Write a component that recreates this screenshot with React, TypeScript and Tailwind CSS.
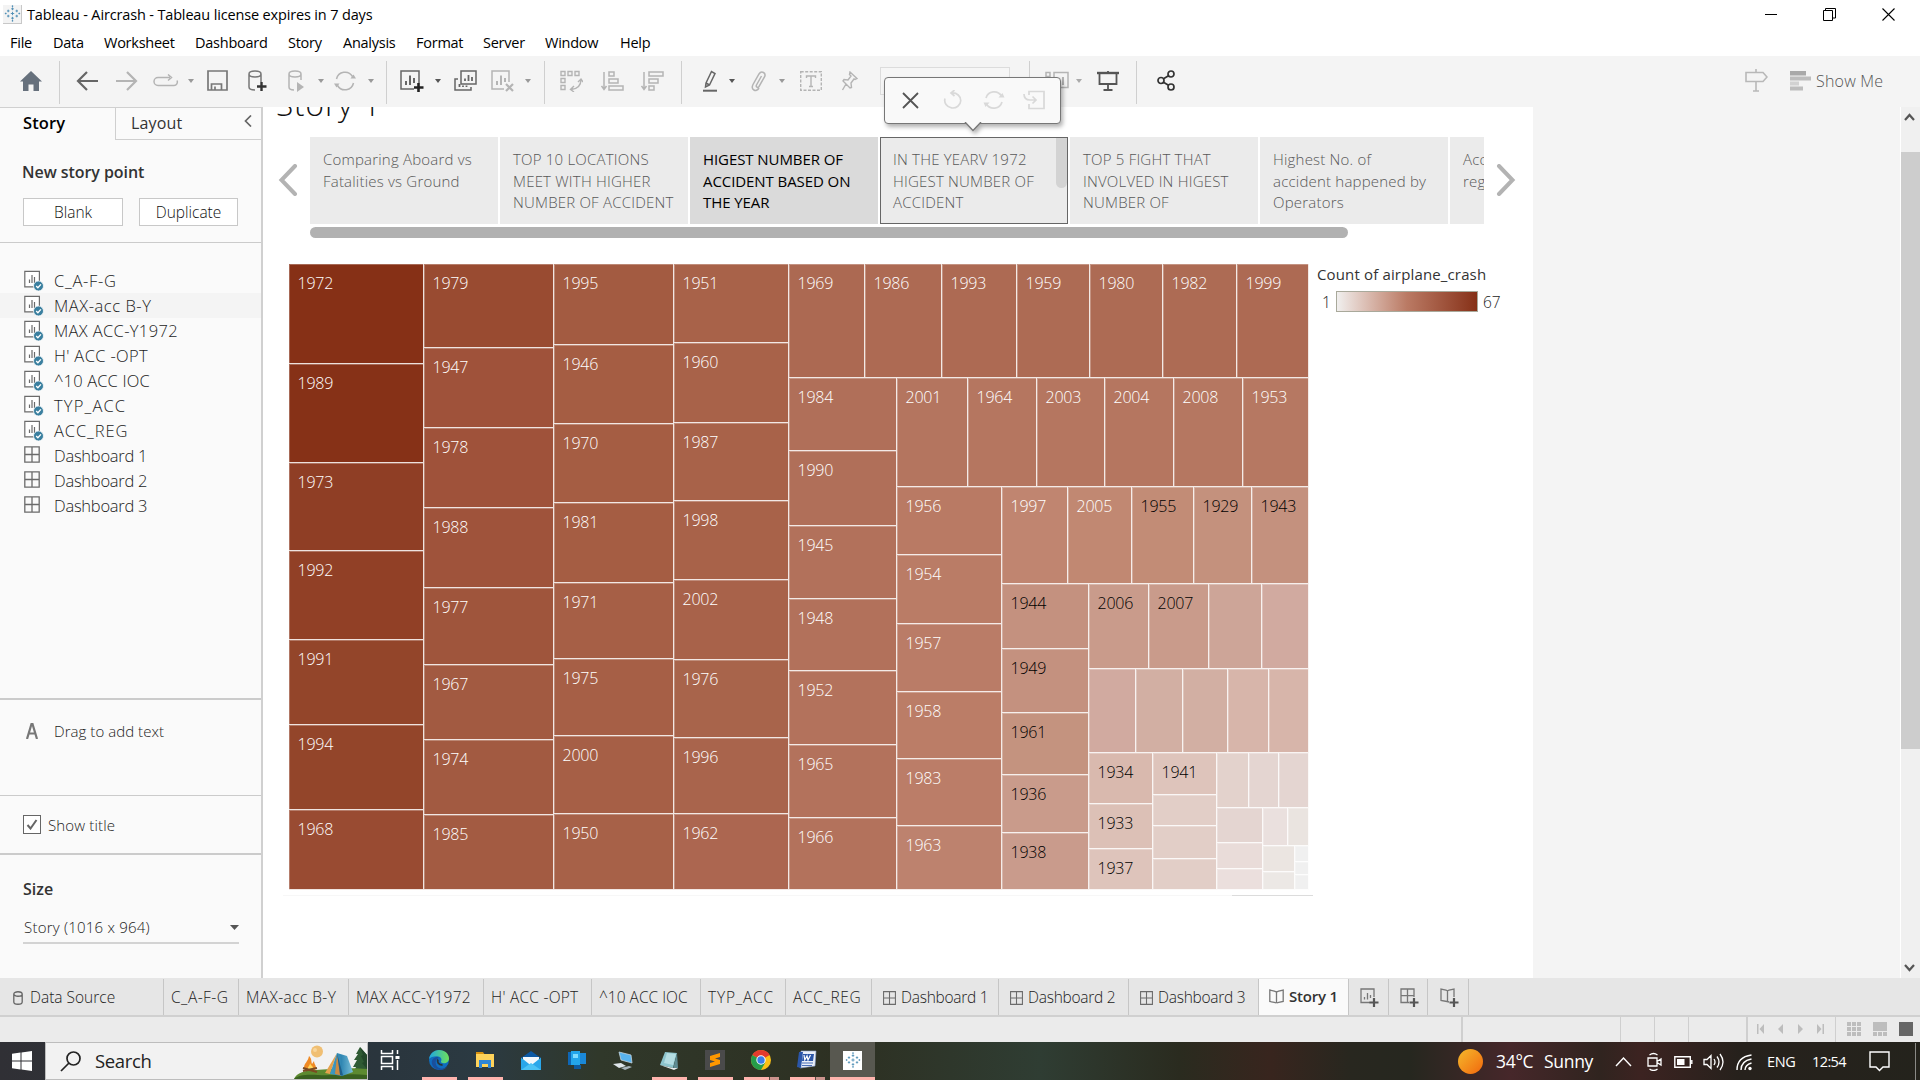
import React from "react";

/* ---------- shared icon shell ---------- */

type IconProps = {
  w: number;
  h: number;
  cls?: string;
  sw?: number;
  children: React.ReactNode;
};

function Icon({ w, h, cls = "", sw = 1.5, children }: IconProps) {
  return (
    <svg
      width={w}
      height={h}
      viewBox={`0 0 ${w} ${h}`}
      fill="none"
      stroke="currentColor"
      strokeWidth={sw}
      className={`block shrink-0 ${cls}`}
    >
      {children}
    </svg>
  );
}

function Caret({ cls = "" }: { cls?: string }) {
  return (
    <Icon w={6} h={4} cls={cls}>
      <path d="M0 0h6L3 4z" fill="currentColor" stroke="none" />
    </Icon>
  );
}

function Separator({ cls = "" }: { cls?: string }) {
  return <div className={`mt-[4px] h-[43px] w-px shrink-0 bg-[#cfcfcf] ${cls}`} />;
}

function TableauMark({ size, cls = "" }: { size: number; cls?: string }) {
  const plus = (x: number, y: number, r: number) => `M${x - r} ${y}h${2 * r}M${x} ${y - r}v${2 * r}`;
  return (
    <svg width={size} height={size} viewBox="0 0 20 20" fill="none" stroke="#4f8fb5" strokeWidth="1.1" className={`block shrink-0 ${cls}`}>
      <path d={plus(10, 10, 2)} />
      <path d={plus(10, 4.5, 1.6)} />
      <path d={plus(10, 15.5, 1.6)} />
      <path d={plus(5, 7, 1.5)} />
      <path d={plus(15, 7, 1.5)} />
      <path d={plus(5, 13, 1.5)} />
      <path d={plus(15, 13, 1.5)} />
      <path d={plus(2, 10, 1)} />
      <path d={plus(18, 10, 1)} />
      <path d={plus(10, 1.4, 0.9)} />
      <path d={plus(10, 18.6, 0.9)} />
    </svg>
  );
}

/* ---------- title bar and menu ---------- */

function TitleBar() {
  return (
    <div className="flex h-7 items-center bg-white text-black">
      <div className="ml-[3px] flex h-[19px] w-[19px] items-center justify-center border-r border-b border-[#c8c8c8] bg-[#f3f3f3]">
        <TableauMark size={17} />
      </div>
      <span className="mt-[2px] ml-[5px] text-[14.5px] tracking-[-0.15px] whitespace-nowrap">
        Tableau - Aircrash - Tableau license expires in 7 days
      </span>
      <div className="ml-auto flex items-center">
        <Icon w={12} h={13} sw={1} cls="mr-[46px]">
          <path d="M0 6.5h12" />
        </Icon>
        <Icon w={13} h={13} sw={1} cls="mr-[46px]">
          <path d="M.5 2.5h9v10h-9zM2.5 2.5v-2h10v9.500h-3" />
        </Icon>
        <Icon w={13} h={13} sw={1.1} cls="mr-[25px]">
          <path d="M.5.5l12 12M12.500.5l-12 12" />
        </Icon>
      </div>
    </div>
  );
}

const menu: [string, string][] = [
  ["File", "w-[43px]"],
  ["Data", "w-[51px]"],
  ["Worksheet", "w-[91px]"],
  ["Dashboard", "w-[93px]"],
  ["Story", "w-[55px]"],
  ["Analysis", "w-[73px]"],
  ["Format", "w-[67px]"],
  ["Server", "w-[62px]"],
  ["Window", "w-[75px]"],
  ["Help", "w-[50px]"],
];

function MenuBar() {
  return (
    <div className="flex h-7 items-center bg-white pt-[2px] pl-[10px] text-[14.5px] tracking-[-0.25px] text-black">
      {menu.map(([label, width]) => (
        <span key={label} className={`${width} shrink-0 whitespace-nowrap`}>
          {label}
        </span>
      ))}
    </div>
  );
}

/* ---------- toolbar ---------- */

function Toolbar() {
  return (
    <div className="flex h-[51px] shrink-0 items-center bg-[#f4f4f4] pb-[2px] text-[#b4b4b4]">
      <Icon w={22} h={20} cls="ml-5 text-[#66707c]">
        <path d="M11 0l11 10.500h-3V20h-5.500v-6.500h-5V20H3v-9.500H0z" fill="currentColor" stroke="none" />
      </Icon>
      <Separator cls="ml-[17px]" />
      <Icon w={22} h={20} sw={2.2} cls="ml-[16px] text-[#666]">
        <path d="M11 1L2 10l9 9M2 10h20" />
      </Icon>
      <Icon w={22} h={20} sw={2.2} cls="ml-[18px]">
        <path d="M11 1l9 9-9 9M20 10H0" />
      </Icon>
      <Icon w={26} h={14} cls="ml-[15px]">
        <path d="M17 3.500H5a3.500 3.500 0 0 0 0 8h16a3.500 3.500 0 0 0 3-5M15 .5l3.500 3-3.500 3" />
      </Icon>
      <Caret cls="ml-[9px] text-[#999]" />
      <Icon w={21} h={21} sw={1.7} cls="ml-[13px] text-[#777]">
        <path d="M1 1h19v19H1zM4.500 20v-6h10v6M8 20v-3.500" />
      </Icon>
      <Icon w={19} h={22} cls="ml-[20px] text-[#777]">
        <path d="M1 4c0-4 12-4 12 0s-12 4-12 0zM1 4v13c0 2 3 3 6 3M13 4v8" />
        <path d="M13.500 12v9M9 16.500h9.500" stroke="#333" strokeWidth="2.400" />
      </Icon>
      <Icon w={17} h={22} cls="ml-[21px]">
        <path d="M1 4c0-4 12-4 12 0s-12 4-12 0zM1 4v13c0 2 2.500 3 5 3M13 4v6" />
        <path d="M9 12l7 5-7 5z" fill="currentColor" stroke="none" />
      </Icon>
      <Caret cls="ml-[13px] text-[#999]" />
      <Icon w={22} h={20} cls="ml-[10px]">
        <path d="M2.500 8a8.700 8.700 0 0 1 16-2.500M19.500 12a8.700 8.700 0 0 1-16 2.500" />
        <path d="M16.500 7.500H22l-2.500-4zM5.500 12.500H0l2.500 4z" fill="currentColor" stroke="none" />
      </Icon>
      <Caret cls="ml-[12px] text-[#999]" />
      <Separator cls="ml-[12px]" />
      <Icon w={24} h={22} cls="ml-[13px] text-[#666]">
        <path d="M14 19H1V1h18v12" />
        <path d="M6 15v-4M10 15V5.500M14 13V8" strokeWidth="2" />
        <path d="M18.500 13v9M14 17.500h9.500" stroke="#222" strokeWidth="2.600" />
      </Icon>
      <Caret cls="ml-[11px] text-[#555]" />
      <Icon w={23} h={21} cls="ml-[13px] text-[#666]">
        <path d="M7 1h15v13H7zM4 9H1v11h16v-3" />
        <path d="M11 11V8.500M14.500 11V5M18 11V7M5.500 17v-3M9 17v-1.500M12.500 17v-1.500" strokeWidth="1.800" />
      </Icon>
      <Icon w={23} h={22} cls="ml-[14px]">
        <path d="M13 19H1V1h17v11" />
        <path d="M6 15v-4M10 15V5.500M14 12V8" strokeWidth="2" />
        <path d="M15 14l7 7M22 14l-7 7" strokeWidth="2.200" />
      </Icon>
      <Caret cls="ml-[11px] text-[#999]" />
      <Separator cls="ml-[13px]" />
      <Icon w={23} h={22} sw={1.4} cls="ml-[15px]">
        <path d="M1 1.500h4v4H1zM8 1.500h4v4H8zM15 1.500h4v4h-4zM1 8.500h4v4H1zM1 15.500h4v4H1zM21 9c0 6-3 10-10 10.500M18 12l3-3 2 3M14 16l-3.500 3.500L14 22" />
      </Icon>
      <Icon w={23} h={20} sw={1.5} cls="ml-[18px]">
        <path d="M3 1v17M.5 15L3 18.500 5.500 15M8 1h5v4H8zM8 8h9v4H8zM8 15h14v4H8z" />
      </Icon>
      <Icon w={23} h={20} sw={1.5} cls="ml-[17px]">
        <path d="M3 1v17M.5 15L3 18.500 5.500 15M8 1h14v4H8zM8 8h9v4H8zM8 15h5v4H8z" />
      </Icon>
      <Separator cls="ml-[17px]" />
      <Icon w={16} h={22} cls="ml-[20px] text-[#666]">
        <path d="M4 13L9.500 1.500l3.500 2L7.500 15l-4 2zM4 13l3.500 2" />
        <path d="M1 20.700h14" strokeWidth="2" />
      </Icon>
      <Caret cls="ml-[11px] text-[#555]" />
      <Icon w={17} h={22} sw={1.5} cls="ml-[15px]">
        <path d="M11.500 6L6.500 15c-1 2 1.300 3.300 2.500 1.500L14.500 7c2-4-3-7-5.500-3L3 14.500c-2.500 5 3 8.500 6 3.500" />
      </Icon>
      <Caret cls="ml-[12px] text-[#999]" />
      <Icon w={22} h={20} sw={1.4} cls="ml-[15px]">
        <path d="M.7.7h20.600v18.600H.7z" strokeDasharray="3 1.500" />
        <path d="M6.500 7V5h9v2M11 5v10.500M9 15.500h4" />
      </Icon>
      <Icon w={17} h={20} sw={1.4} cls="ml-[19px]">
        <path d="M9 1l7 6.500-2 1-1-.5-3 4 .5 4.500-1.500.5-7-7L3 8.500l4 .5 3-4-1.500-1.500zM5 13l-3.500 6" />
      </Icon>
      <div className="ml-[22px] h-[28px] w-[130px] shrink-0 border border-[#dcdcdc] bg-[#f6f6f6]" />
      <Separator cls="ml-[19px]" />
      <Icon w={24} h={20} sw={1.5} cls="ml-[15px]">
        <path d="M1 1.500h4v4H1zM1 8h4v11H1zM9 1.500h14v15H9z" />
        <path d="M14 14V9M18 14V6" strokeWidth="2" />
      </Icon>
      <Caret cls="ml-[7px] text-[#aaa]" />
      <Icon w={22} h={20} sw={1.8} cls="ml-[15px] text-[#555]">
        <path d="M0 2h22" strokeWidth="2.400" />
        <path d="M2.500 2v11h17V2M11 0v2M11 13v6M6.500 19h9" />
      </Icon>
      <Separator cls="ml-[17px]" />
      <Icon w={19} h={21} sw={1.7} cls="ml-[20px] text-[#333]">
        <circle cx="4" cy="10.500" r="3" />
        <circle cx="14" cy="4" r="3" />
        <circle cx="14" cy="17" r="3" />
        <path d="M6.500 8.700l5-3M6.500 12.300l5 3" />
      </Icon>
      <div className="ml-auto flex items-center">
        <Icon w={23} h={23} sw={1.6} cls="text-[#b8b8b8]">
          <path d="M1 3.500h17l4 4.500-4 4.500H1zM11 0v3.500M11 12.500V22M8 22h6" />
        </Icon>
        <svg width="21" height="20" viewBox="0 0 21 20" className="ml-[22px] block" fill="#bdbdbd">
          <path d="M0 0h16v4.500H0z" fill="#a9a9a9" />
          <path d="M0 5.500h21v4H0z" />
          <path d="M0 10.500h9v4H0z" fill="#d2d2d2" />
          <path d="M0 15.500h13v4H0z" />
        </svg>
        <span className="mr-9 ml-[5px] w-[68px] text-[16px] font-light tracking-[0.2px] whitespace-nowrap text-[#555]">Show Me</span>
      </div>
    </div>
  );
}

/* ---------- sidebar ---------- */

function SheetIcon() {
  return (
    <svg width="20" height="22" viewBox="0 0 20 22" fill="none" stroke="#6b6b6b" strokeWidth="1.200" className="block shrink-0">
      <path d="M.8 1.300h14.600v15.500H.8z" fill="#fff" />
      <path d="M5.500 13V9.500M8 13V5M10.500 13V7" />
      <circle cx="14.500" cy="16" r="5" fill="#3a7f9f" stroke="#fafafa" strokeWidth=".8" />
      <path d="M12.200 16l1.700 1.700 3-3.300" stroke="#fff" strokeWidth="1.400" />
    </svg>
  );
}

function DashIcon({ w = 16, h = 17, cls = "" }: { w?: number; h?: number; cls?: string }) {
  return (
    <svg width={w} height={h} viewBox="0 0 16 17" fill="none" stroke="#6b6b6b" strokeWidth="1.300" className={`block shrink-0 ${cls}`}>
      <path d="M.8.8h14.400v15.400H.8zM8 .8v15.400M.8 8.500h14.400" />
    </svg>
  );
}

const sheets: [string, string][] = [
  ["C_A-F-G", "tracking-[0.7px]"],
  ["MAX-acc B-Y", "tracking-[0.55px]"],
  ["MAX ACC-Y1972", "tracking-[0.35px]"],
  ["H' ACC -OPT", "tracking-[0.35px]"],
  ["^10 ACC IOC", "tracking-[0.15px]"],
  ["TYP_ACC", "tracking-[1.15px]"],
  ["ACC_REG", "tracking-[0.9px]"],
];

const dashboards = ["Dashboard 1", "Dashboard 2", "Dashboard 3"];

function Sidebar() {
  return (
    <aside className="flex w-[263px] shrink-0 flex-col border-t border-r-2 border-[#d0d0d0] bg-[#fafafa] text-[#333]">
      <div className="flex h-8 shrink-0">
        <div className="flex w-[115px] items-center pb-[2px] pl-[23px] text-[16.5px] font-semibold tracking-[0.1px] text-black">Story</div>
        <div className="flex flex-1 items-center border-b border-l border-[#cfcfcf] pb-px pl-[15px]">
          <span className="text-[16px] tracking-[0.15px] text-[#333]">Layout</span>
          <Icon w={8} h={12} sw={1.7} cls="mr-[9px] mb-1 ml-auto text-[#666]">
            <path d="M7 .5L1.500 6 7 11.500" />
          </Icon>
        </div>
      </div>
      <div className="flex h-[102px] shrink-0 flex-col px-[22px] pt-[21px]">
        <h2 className="text-[16px] leading-[22px] font-semibold tracking-[-0.05px] whitespace-nowrap">New story point</h2>
        <div className="mt-[15px] flex gap-4 pl-px">
          <button className="h-[28px] w-[100px] border border-[#c8c8c8] bg-white text-[15.5px] leading-[24px] font-light text-[#111]">Blank</button>
          <button className="h-[28px] w-[99px] border border-[#c8c8c8] bg-white text-[15.5px] leading-[24px] font-light text-[#111]">Duplicate</button>
        </div>
      </div>
      <div className="flex h-[456px] shrink-0 flex-col border-t border-[#cbcbcb] pt-[25px] text-[16.5px] font-light text-[#1c1c1c]">
        {sheets.map(([name, tracking], i) => (
          <div key={name} className={`flex h-[25px] items-center pl-6 ${i === 1 ? "bg-[#f4f4f4]" : ""}`}>
            <div className="mt-px w-[30px]">
              <SheetIcon />
            </div>
            <span className={`mt-[2px] whitespace-nowrap ${tracking}`}>{name}</span>
          </div>
        ))}
        {dashboards.map((name) => (
          <div key={name} className="flex h-[25px] items-center pl-6">
            <div className="w-[30px]">
              <DashIcon cls="mb-[2px]" />
            </div>
            <span className="mt-[2px] tracking-[-0.25px] whitespace-nowrap">{name}</span>
          </div>
        ))}
      </div>
      <div className="flex h-[97px] shrink-0 border-t-2 border-[#cbcbcb] pt-[23px] pl-[26px]">
        <Icon w={12} h={16} sw={2.2} cls="text-[#777]">
          <path d="M1 16L5.500 1h1L11 16M3 10.500h6" />
        </Icon>
        <span className="-mt-[2px] ml-4 text-[15px] leading-[20px] font-light tracking-[0.05px] whitespace-nowrap text-[#1c1c1c]">Drag to add text</span>
      </div>
      <div className="flex h-[58px] shrink-0 items-center border-t border-[#cbcbcb] pl-[23px]">
        <div className="flex h-[19px] w-[18px] items-center justify-center border border-[#666] bg-white">
          <Icon w={12} h={11} sw={2} cls="text-[#666]">
            <path d="M1.500 6l3 3.500L10.500 1" />
          </Icon>
        </div>
        <span className="mt-[2px] ml-[7px] text-[15px] font-light tracking-[0.15px] text-[#1c1c1c]">Show title</span>
      </div>
      <div className="flex flex-1 flex-col border-t-2 border-[#cbcbcb] pt-[23px] pr-[22px] pl-[23px]">
        <h2 className="text-[16px] leading-[22px] font-semibold">Size</h2>
        <div className="mt-[15px] flex h-[29px] items-center border-b-2 border-[#d3d3d3] pb-[2px] pl-px">
          <span className="text-[15px] font-light tracking-[0.22px] whitespace-nowrap text-[#1c1c1c]">Story (1016 x 964)</span>
          <Icon w={9} h={5} cls="ml-auto text-[#555]">
            <path d="M0 0h9L4.500 5z" fill="currentColor" stroke="none" />
          </Icon>
        </div>
      </div>
    </aside>
  );
}

/* ---------- story navigator ---------- */

type Point = { lines: string[]; active?: boolean; hover?: boolean };

const points: Point[] = [
  { lines: ["Comparing Aboard vs", "Fatalities vs Ground"] },
  { lines: ["TOP 10 LOCATIONS", "MEET WITH HIGHER", "NUMBER OF ACCIDENT"] },
  { lines: ["HIGEST NUMBER OF", "ACCIDENT BASED ON", "THE YEAR"], active: true },
  { lines: ["IN THE YEARV 1972", "HIGEST NUMBER OF", "ACCIDENT"], hover: true },
  { lines: ["TOP 5 FIGHT THAT", "INVOLVED IN HIGEST", "NUMBER OF"] },
  { lines: ["Highest No. of", "accident happened by", "Operators"] },
  { lines: ["Acc", "reg"] },
];

function StoryCard({ lines, active, hover }: Point) {
  const tone = active
    ? "bg-[#dadada] text-black"
    : hover
      ? "bg-[#ebebeb] text-[#585858] outline outline-[#666] -outline-offset-1"
      : "bg-[#ebebeb] text-[#585858]";
  return (
    <div className={`flex h-[87px] w-[188px] shrink-0 justify-between ${tone}`}>
      <div
        className={`pt-[12px] pl-[13px] text-[15px] leading-[21.500px] whitespace-nowrap ${
          active ? "tracking-[-0.08px]" : "font-light tracking-[0.2px]"
        }`}
      >
        {lines.map((line) => (
          <div key={line}>{line}</div>
        ))}
      </div>
      {hover && <div className="mt-px mr-px -ml-4 h-[50px] w-[11px] rounded-b-md bg-[#d3d3d3]" />}
    </div>
  );
}

function StoryNavigator() {
  return (
    <div className="flex h-[101px]">
      <Icon w={20} h={32} sw={4} cls="mt-[27px] ml-[15px] text-[#b3b3b3]">
        <path d="M17 2L3.500 16 17 30" strokeLinecap="round" />
      </Icon>
      <div className="ml-3 w-[1174px] shrink-0 overflow-hidden">
        <div className="flex gap-[2px]">
          {points.map((p) => (
            <StoryCard key={p.lines[0]} {...p} />
          ))}
        </div>
        <div className="mt-[3px] h-[11px] w-[1038px] rounded-full bg-[#b1b1b1]" />
      </div>
      <Icon w={20} h={32} sw={4} cls="mt-[27px] ml-3 text-[#b3b3b3]">
        <path d="M3 2l13.500 14L3 30" strokeLinecap="round" />
      </Icon>
    </div>
  );
}

/* ---------- treemap ---------- */

/* [end position of the cell along its strip, label, colour] */
type Cell = [number, string, string];
type Strip = { from: number; size: number; cells: Cell[] };
type Level = { rows: Strip[]; cols: Strip[] };

const years: Strip[] = [
  {
    from: 263,
    size: 135,
    cells: [
      [363, "1972", "#863016"],
      [462, "1989", "#863117"],
      [550, "1973", "#8f3e25"],
      [639, "1992", "#914026"],
      [724, "1991", "#93452a"],
      [809, "1994", "#93452a"],
      [889, "1968", "#994b32"],
    ],
  },
  {
    from: 263,
    size: 130,
    cells: [
      [347, "1979", "#994b31"],
      [427, "1947", "#9f523a"],
      [507, "1978", "#9f523a"],
      [587, "1988", "#9f533b"],
      [664, "1977", "#9f553c"],
      [739, "1967", "#a25a41"],
      [814, "1974", "#a25a41"],
      [889, "1985", "#a35b42"],
    ],
  },
  {
    from: 263,
    size: 120,
    cells: [
      [344, "1995", "#a35b41"],
      [423, "1946", "#a55d43"],
      [502, "1970", "#a55d43"],
      [582, "1981", "#a55d43"],
      [658, "1971", "#a65f46"],
      [735, "1975", "#a65f46"],
      [813, "2000", "#a65f46"],
      [889, "1950", "#a76148"],
    ],
  },
  {
    from: 263,
    size: 115,
    cells: [
      [342, "1951", "#a86249"],
      [422, "1960", "#a86249"],
      [500, "1987", "#a86249"],
      [579, "1998", "#a86249"],
      [659, "2002", "#a8624a"],
      [737, "1976", "#a8644b"],
      [813, "1996", "#a9644c"],
      [889, "1962", "#ac6650"],
    ],
  },
];

const levels: Level[] = [
  {
    rows: [
      {
        from: 788,
        size: 114,
        cells: [
          [864, "1969", "#ac6952"],
          [941, "1986", "#ad6a53"],
          [1016, "1993", "#ad6a53"],
          [1089, "1959", "#ad6b54"],
          [1162, "1980", "#ad6b54"],
          [1236, "1982", "#ad6b54"],
          [1308, "1999", "#ad6a53"],
        ],
      },
    ],
    cols: [
      {
        from: 377,
        size: 108,
        cells: [
          [450, "1984", "#b06f59"],
          [525, "1990", "#b06f59"],
          [598, "1945", "#b2715b"],
          [670, "1948", "#b2715b"],
          [744, "1952", "#b3725c"],
          [817, "1965", "#b3725c"],
          [889, "1966", "#b3725c"],
        ],
      },
    ],
  },
  {
    rows: [
      {
        from: 896,
        size: 109,
        cells: [
          [967, "2001", "#b4755f"],
          [1036, "1964", "#b57660"],
          [1104, "2003", "#b57660"],
          [1173, "2004", "#b57660"],
          [1242, "2008", "#b57761"],
          [1308, "1953", "#b67862"],
        ],
      },
    ],
    cols: [
      {
        from: 486,
        size: 105,
        cells: [
          [554, "1956", "#b97a64"],
          [623, "1954", "#ba7c66"],
          [691, "1957", "#ba7c67"],
          [758, "1958", "#bb7d67"],
          [825, "1983", "#bb7d68"],
          [889, "1963", "#bd826e"],
        ],
      },
    ],
  },
  {
    rows: [
      {
        from: 1001,
        size: 97,
        cells: [
          [1067, "1997", "#c08570"],
          [1131, "2005", "#c18872"],
          [1193, "1955", "#c28c76"],
          [1251, "1929", "#c4917d"],
          [1308, "1943", "#c4917e"],
        ],
      },
    ],
    cols: [
      {
        from: 583,
        size: 87,
        cells: [
          [648, "1944", "#c4917f"],
          [712, "1949", "#c4917f"],
          [774, "1961", "#c4937f"],
          [832, "1936", "#c99b8b"],
          [889, "1938", "#c99b8c"],
        ],
      },
    ],
  },
  {
    rows: [
      {
        from: 1088,
        size: 85,
        cells: [
          [1148, "2006", "#c99b8b"],
          [1208, "2007", "#c99b8b"],
          [1261, "", "#cda598"],
          [1308, "", "#d1aaa0"],
        ],
      },
      {
        from: 1088,
        size: 84,
        cells: [
          [1135, "", "#d1aaa0"],
          [1182, "", "#d2afa3"],
          [1227, "", "#d2afa3"],
          [1268, "", "#d7b5aa"],
          [1308, "", "#d7b5aa"],
        ],
      },
    ],
    cols: [
      {
        from: 752,
        size: 64,
        cells: [
          [803, "1934", "#d9b9ae"],
          [848, "1933", "#dcc0b6"],
          [889, "1937", "#dec4bb"],
        ],
      },
      {
        from: 752,
        size: 64,
        cells: [
          [794, "1941", "#dec4bb"],
          [825, "", "#e2cec7"],
          [858, "", "#e2cec7"],
          [889, "", "#e2cec7"],
        ],
      },
    ],
  },
  {
    rows: [
      {
        from: 1216,
        size: 55,
        cells: [
          [1248, "", "#e3d2cc"],
          [1278, "", "#e4d5d1"],
          [1308, "", "#e4d5d1"],
        ],
      },
    ],
    cols: [
      {
        from: 807,
        size: 46,
        cells: [
          [842, "", "#e4d5d1"],
          [868, "", "#e9dcd9"],
          [889, "", "#ebdfdd"],
        ],
      },
    ],
  },
  {
    rows: [
      {
        from: 1262,
        size: 38,
        cells: [
          [1287, "", "#eae0de"],
          [1308, "", "#eae4e0"],
        ],
      },
    ],
    cols: [
      {
        from: 845,
        size: 32,
        cells: [
          [871, "", "#ebe5e1"],
          [889, "", "#ece8e5"],
        ],
      },
      {
        from: 845,
        size: 14,
        cells: [
          [861, "", "#f0f0f0"],
          [874, "", "#f0f0f0"],
          [889, "", "#f0f0f0"],
        ],
      },
    ],
  },
];

const darkLabels = new Set([
  "1955", "1929", "1943", "1944", "1949", "1961", "1936", "1938", "2006", "2007", "1934", "1933", "1937", "1941",
]);

function StripView({ strip, vertical }: { strip: Strip; vertical: boolean }) {
  return (
    <div
      className={`flex shrink-0 ${vertical ? "flex-col" : "flex-row"}`}
      style={vertical ? { width: strip.size } : { height: strip.size }}
    >
      {strip.cells.map(([end, label, color], i) => {
        const start = i === 0 ? strip.from : strip.cells[i - 1][0];
        const length = end - start;
        return (
          <div
            key={end}
            className={`shrink-0 border-r border-b border-white/85 pt-[9px] pl-[8.500px] text-[16px] leading-[21px] font-light tracking-[-0.2px] shadow-[inset_1px_1px_0_rgba(255,255,255,0.28)] ${
              darkLabels.has(label) ? "text-black" : "text-white"
            }`}
            style={{ backgroundColor: color, ...(vertical ? { height: length } : { width: length }) }}
          >
            {label}
          </div>
        );
      })}
    </div>
  );
}

function LevelView({ index }: { index: number }) {
  const level = levels[index];
  if (!level) return null;
  return (
    <div className="flex flex-col">
      {level.rows.map((row) => (
        <StripView key={row.cells[0][0]} strip={row} vertical={false} />
      ))}
      <div className="flex">
        {level.cols.map((col) => (
          <StripView key={col.cells[0][0]} strip={col} vertical />
        ))}
        <LevelView index={index + 1} />
      </div>
    </div>
  );
}

function Treemap() {
  return (
    <div className="flex h-[626px] w-[1020px] shrink-0 overflow-hidden">
      {years.map((col) => (
        <StripView key={col.cells[0][0]} strip={col} vertical />
      ))}
      <LevelView index={0} />
    </div>
  );
}

function Legend() {
  return (
    <div className="ml-[8px] text-[#333]">
      <div className="text-[15px] leading-[20px] tracking-[0.15px] whitespace-nowrap">Count of airplane_crash</div>
      <div className="mt-[7px] flex h-[21px] items-center pl-[5px] text-[15.5px] font-light text-[#1c1c1c]">
        <span className="mt-[2px] w-[14px]">1</span>
        <div className="h-[21px] w-[142px] border border-[#a9a99b] bg-linear-to-r from-[#f0efee] via-[#ba7a64] to-[#863016]" />
        <span className="mt-[2px] ml-[5px]">67</span>
      </div>
    </div>
  );
}

/* ---------- floating story-point toolbar ---------- */

function StoryPopup() {
  return (
    <div className="absolute top-[77px] left-[884px] z-10 drop-shadow-[2px_3px_2px_rgba(0,0,0,0.3)]">
      <div className="flex h-[47px] w-[177px] items-center rounded-[4px] border-[1.500px] border-[#777] bg-[#f9f9f9] pb-px pl-[17px] text-[#d9d9d9]">
        <Icon w={17} h={17} sw={1.8} cls="text-[#555]">
          <path d="M1 1l15 15M16 1L1 16" />
        </Icon>
        <Icon w={20} h={20} sw={1.7} cls="ml-[24px]">
          <path d="M9 3a8 7.500 0 1 1-7 5.500M11.500 0L8 3l3.500 3" />
        </Icon>
        <Icon w={22} h={20} sw={1.7} cls="ml-[20px]">
          <path d="M3 8a8.500 8.500 0 0 1 15.500-2M19 12a8.500 8.500 0 0 1-15.500 2" />
          <path d="M15.500 7.500H21.500l-2-4.500zM6.500 12.500H.5l2 4.500z" fill="currentColor" stroke="none" />
        </Icon>
        <Icon w={22} h={20} sw={1.7} cls="ml-[18px]">
          <path d="M6 5V1.500h15v17H6V14M1 4c0 4 2 6 6 6h5M9.500 6.500l3.500 3.500-3.500 3.500" />
        </Icon>
      </div>
      <Icon w={18} h={10} sw={1.3} cls="-mt-[2px] ml-[80px] text-[#777]">
        <path d="M1 0l8 8.500L17 0" fill="#f9f9f9" />
      </Icon>
    </div>
  );
}

/* ---------- workspace ---------- */

function Workspace() {
  return (
    <div className="flex h-[871px]">
      <Sidebar />
      <main className="flex w-[1270px] shrink-0 flex-col overflow-hidden bg-white">
        <div className="flex h-[30px] shrink-0 items-end overflow-hidden pl-[13px]">
          <h1 className="-translate-y-[15px] text-[31.500px] leading-[36px] font-light tracking-[0.9px] whitespace-nowrap text-[#111]">Story 1</h1>
        </div>
        <StoryNavigator />
        <div className="mt-[26px] flex pl-[26px]">
          <Treemap />
          <Legend />
        </div>
        <div className="mt-[5px] ml-5 flex h-px">
          <div className="w-[949px] bg-[#f7f7f7]" />
          <div className="w-[81px] bg-[#dcdcdc]" />
        </div>
      </main>
      <div className="flex-1 bg-[#f4f4f4]" />
      <div className="flex w-[20px] shrink-0 flex-col items-center border-l border-white bg-[#f0f0f0] text-[#555]">
        <Icon w={11} h={8} sw={2.2} cls="mt-[6px] mr-[2px] mb-[31px]">
          <path d="M1 7l4.500-5L10 7" />
        </Icon>
        <div className="h-[597px] w-full bg-[#cdcdcd]" />
        <Icon w={11} h={8} sw={2.2} cls="mt-auto mr-[2px] mb-[6px]">
          <path d="M1 1l4.500 5L10 1" />
        </Icon>
      </div>
    </div>
  );
}

/* ---------- sheet tabs and status bar ---------- */

function StoryIcon({ cls = "" }: { cls?: string }) {
  return (
    <Icon w={15} h={15} sw={1.3} cls={cls}>
      <path d="M.8 1l4.500 1.200q2.200.6 2.200 1.300 0-.7 2.200-1.300L14.200 1v11.500l-4.500.8q-2.200.5-2.200 1 0-.5-2.200-1l-4.500-.8zM7.500 3.500V14" />
    </Icon>
  );
}

const sheetTabs: [string, string][] = [
  ["C_A-F-G", "w-[75px] tracking-[0.45px]"],
  ["MAX-acc B-Y", "w-[110px] tracking-[0.4px]"],
  ["MAX ACC-Y1972", "w-[135px] tracking-[0.2px]"],
  ["H' ACC -OPT", "w-[108px] tracking-[0.25px]"],
  ["^10 ACC IOC", "w-[109px] tracking-[0px]"],
  ["TYP_ACC", "w-[85px] tracking-[0.8px]"],
  ["ACC_REG", "w-[86px] tracking-[0.65px]"],
];

const dashTabs: [string, string][] = [
  ["Dashboard 1", "w-[127px]"],
  ["Dashboard 2", "w-[130px]"],
  ["Dashboard 3", "w-[130px]"],
];

function SheetTabs() {
  const tab = "flex h-full shrink-0 items-center border-r border-[#c6c6c6] whitespace-nowrap";
  return (
    <div className="flex h-[39px] shrink-0 border-t border-b-2 border-t-[#e6e6e6] border-b-[#d0d0d0] bg-[#e6e6e6] text-[15.500px] font-light text-[#222]">
      <div className={`${tab} w-[164px] pt-px pl-[13px]`}>
        <Icon w={10} h={14} sw={1.3} cls="mr-[7px] text-[#666]">
          <path d="M.8 3c0-3 8.400-3 8.400 0s-8.400 3-8.400 0zM.8 3v8c0 3 8.400 3 8.400 0V3" />
        </Icon>
        Data Source
      </div>
      {sheetTabs.map(([name, layout]) => (
        <div key={name} className={`${tab} ${layout} pt-px pl-[7px]`}>
          {name}
        </div>
      ))}
      {dashTabs.map(([name, width]) => (
        <div key={name} className={`${tab} ${width} pt-px pl-[10px] tracking-[-0.25px]`}>
          <DashIcon w={15} h={14} cls="mr-[4px]" />
          {name}
        </div>
      ))}
      <div className={`${tab} w-[90px] bg-[#fafafa] pb-px pl-[10px] text-[15px] font-semibold tracking-[-0.2px] text-[#333]`}>
        <StoryIcon cls="mr-[5px] text-[#777]" />
        Story 1
      </div>
      <div className={`${tab} w-[40px] pl-[11px] text-[#777]`}>
        <Icon w={19} h={19} sw={1.3}>
          <path d="M10 14.500H1V1h13v8M4.500 11.500V9M7.500 11.500V5M10.500 10V7" />
          <path d="M14 10v9M9.500 14.500h9" stroke="#555" strokeWidth="2.200" />
        </Icon>
      </div>
      <div className={`${tab} w-[39px] pl-[11px] text-[#777]`}>
        <Icon w={19} h={19} sw={1.3}>
          <path d="M9 14.500H1V1h13v8M7.500 1v13.500M1 7.700h13" />
          <path d="M14 10v9M9.500 14.500h9" stroke="#555" strokeWidth="2.200" />
        </Icon>
      </div>
      <div className={`${tab} w-[41px] pl-[12px] text-[#777]`}>
        <Icon w={19} h={19} sw={1.3}>
          <path d="M9 14l-2-.5-6-1V1l5 1.200q1.500.4 1.500 1 0-.6 1.500-1L14 1v8M7.500 3v10" />
          <path d="M14 10v9M9.500 14.500h9" stroke="#555" strokeWidth="2.200" />
        </Icon>
      </div>
    </div>
  );
}

function StatusBar() {
  return (
    <div className="flex h-[25px] shrink-0 bg-[#ebebeb] text-[#bdbdbd]">
      <div className="w-[1463px] border-r-2 border-[#cfcfcf]" />
      <div className="w-[158px] border-r border-[#cfcfcf]" />
      <div className="w-[34px] border-r border-[#cfcfcf]" />
      <div className="w-[34px] border-r border-[#cfcfcf]" />
      <div className="w-[59px] border-r-2 border-[#cfcfcf]" />
      <div className="flex w-[88px] items-center border-r border-[#cfcfcf] pr-[10px] pb-[2px] pl-[9px]">
        <svg width="68" height="10" viewBox="0 0 68 10" fill="currentColor">
          <path d="M0 0h1.500v10H0zM7 0v10L2.500 5zM26 0v10l-5-5zM41 0v10l5-5zM60 0v10l4.500-5zM65.500 0H67v10h-1.500z" />
        </svg>
      </div>
      <div className="flex flex-1 items-center pb-px pl-[11px]">
        <svg width="14" height="14" viewBox="0 0 14 14" fill="currentColor">
          <path d="M0 0h4v4H0zM5 0h4v4H5zM10 0h4v4h-4zM0 5h4v4H0zM5 5h4v4H5zM10 5h4v4h-4zM0 10h4v4H0zM5 10h4v4H5zM10 10h4v4h-4z" />
        </svg>
        <svg width="14" height="14" viewBox="0 0 14 14" fill="currentColor" className="ml-3">
          <path d="M0 0h14v9H0zM0 10h4v4H0zM5 10h4v4H5zM10 10h4v4h-4z" />
        </svg>
        <div className="ml-3 h-[14px] w-[14px] bg-[#666]" />
      </div>
    </div>
  );
}

/* ---------- windows taskbar ---------- */

function CampingArt() {
  return (
    <svg width="73" height="36" viewBox="0 0 73 36" className="ml-auto block self-end">
      <defs>
        <linearGradient id="tent" x1="0" x2="1">
          <stop offset="0" stopColor="#3f9cc4" />
          <stop offset=".5" stopColor="#3187b3" />
          <stop offset="1" stopColor="#79bfd8" />
        </linearGradient>
      </defs>
      <path d="M66 4l-4 7h2l-4 6h3l-4 7h3l-3 6h14V12z" fill="#2f5a33" />
      <path d="M66 4l3 8-2 1 3 6-2 1 5 6V12z" fill="#23472a" />
      <path d="M0 36c2-6 12-9 22-9 12-1 34-3 51-1v10z" fill="#5d8a30" />
      <path d="M0 36c3-4 14-5 24-4 16 1 30-2 49 0v4z" fill="#39601f" />
      <circle cx="23" cy="8.500" r="6" fill="#f0bf73" />
      <circle cx="21" cy="7" r="2" fill="#f8d69b" />
      <path d="M43 10L31 30l5 1z" fill="#e5a24c" />
      <path d="M43 10l10 3 6 16-11 4-12-2z" fill="url(#tent)" />
      <path d="M43 12l-2 19 6 1.500z" fill="#c98b45" />
      <path d="M43 10l3 22 3 .5z" fill="#1f5f8a" />
      <path d="M15 13c-1 6-5 7-5 12 0 4 12 4 12 0 0-3-2-4-2-7l-2 3c-1-3 0-5-3-8z" fill="#f08a24" />
      <path d="M16 20c0 3-3 4-2 6s5 1 5-1-2-2-3-5z" fill="#ffd95e" />
      <path d="M9 28l14-3M9 25l14 4" stroke="#7a4a21" strokeWidth="2" />
    </svg>
  );
}

function AppSlot({ children, width = "w-[46px]", open = false, active = false, stacked = false }: {
  children: React.ReactNode;
  width?: string;
  open?: boolean;
  active?: boolean;
  stacked?: boolean;
}) {
  return (
    <div className={`flex h-full shrink-0 flex-col items-center ${width} ${active ? "bg-[#585850]" : ""}`}>
      <div className="flex flex-1 items-center pt-px">{children}</div>
      <div className={`flex h-[3px] ${active ? "w-full" : "w-[35px]"} ${open ? "bg-[#ffb4ae]" : ""}`}>
        {stacked && <div className="ml-auto w-[10px] border-l border-[#5a4a44] bg-[#cb938d]" />}
      </div>
    </div>
  );
}

function TaskbarApps() {
  return (
    <div className="flex h-full">
      <AppSlot width="w-[48px]">
        <Icon w={20} h={20} sw={1.5} cls="mr-[5px] text-white">
          <path d="M1.500 0v3.500h11V0M1.500 6.500h11v7h-11zM1.500 20v-3.500h11V20M17.500 0v4M17.500 10v10" />
          <path d="M15.500 6h4v3h-4z" fill="currentColor" stroke="none" />
        </Icon>
      </AppSlot>
      <AppSlot open>
        <svg width="20" height="20" viewBox="0 0 20 20">
          <defs>
            <linearGradient id="edgeTop" x1="0" x2="1">
              <stop offset="0" stopColor="#1ea7e1" />
              <stop offset="1" stopColor="#6ee05a" />
            </linearGradient>
          </defs>
          <circle cx="10" cy="10" r="10" fill="#0f6cbf" />
          <path d="M0 9C1 3.500 5 0 10 0c6 0 10 4 10 8.500 0 3-2.500 4.800-5 4.800-2 0-3.500-.8-3-2 1.500-2-.5-5-4-5C4 6.300 1 7.500 0 9z" fill="url(#edgeTop)" />
          <path d="M8 9c-3 3-1 9.500 5.500 9.500 2 0 3.500-.8 4.500-2C15 22 5 21 3 14c-1-4 2-7 5-7 2 0 2 1 0 2z" fill="#1a4f9c" />
          <path d="M9 9.500c-1 2 0 5.500 4.500 5.500" stroke="#2a3438" strokeWidth="1.800" fill="none" />
        </svg>
      </AppSlot>
      <AppSlot open>
        <svg width="20" height="18" viewBox="0 0 20 18">
          <path d="M1 1h7l2 3H1z" fill="#d9920f" />
          <path d="M1 3h18v13H1z" fill="#ffd35a" />
          <path d="M4 9h12v8h-3v-4H7v4H4z" fill="#2f86d6" />
        </svg>
      </AppSlot>
      <AppSlot>
        <svg width="20" height="19" viewBox="0 0 20 19">
          <path d="M0 7l10-7 10 7z" fill="#0c59a4" />
          <path d="M2 6h16v8H2z" fill="#f3f8fc" />
          <path d="M0 6.500l10 8 10-8V19H0z" fill="#2aa7ea" />
          <path d="M0 19l10-7 10 7z" fill="#4cc3f5" />
        </svg>
      </AppSlot>
      <AppSlot>
        <svg width="18" height="18" viewBox="0 0 18 18">
          <path d="M0 1h11v13H0z" fill="#0e66b5" />
          <path d="M11 2h7v11h-7z" fill="#1a88d8" />
          <path d="M3 0h9v14H3z" fill="#23a5ea" />
          <path d="M5 3h5v4H5z" fill="#7fdcff" />
          <path d="M6 14h7v4H6z" fill="#0d5a9f" />
        </svg>
      </AppSlot>
      <AppSlot>
        <svg width="20" height="19" viewBox="0 0 20 19">
          <path d="M6 1l12 3 1 8-11-3z" fill="#58b4f0" stroke="#c5d4dd" strokeWidth=".8" />
          <path d="M0 13l8-1 5 3-7 2z" fill="#dfe6ea" />
          <path d="M8 17l8-2 3 1-7 3z" fill="#a9b6bd" />
        </svg>
      </AppSlot>
      <AppSlot open>
        <svg width="20" height="19" viewBox="0 0 20 19">
          <path d="M6 1l12 1-4 15-13-3z" fill="#8cc4cc" />
          <path d="M8 2l9 1-3 11-9-2z" fill="#b4dde2" />
          <path d="M18 2l1 15-5 1z" fill="#5f8c93" />
          <path d="M1 14l13 3 5 0-4 2z" fill="#e8eced" />
        </svg>
      </AppSlot>
      <AppSlot open>
        <svg width="20" height="20" viewBox="0 0 20 20">
          <path d="M0 0h20v20H0z" fill="#4a4a4a" />
          <path d="M5 6l10-3v4l-5 1.500 5 1.500v4L5 17v-4l5-1.500L5 10z" fill="#ff9800" />
        </svg>
      </AppSlot>
      <AppSlot open stacked>
        <svg width="20" height="20" viewBox="0 0 20 20">
          <circle cx="10" cy="10" r="10" fill="#fbc116" />
          <path d="M10 10L1.340 5A10 10 0 0 1 18.660 5z" fill="#e33b2e" />
          <path d="M10 10L1.340 5A10 10 0 0 0 10 20l4.300-7.500z" fill="#269c4a" />
          <circle cx="10" cy="10" r="4.700" fill="#fff" />
          <circle cx="10" cy="10" r="3.700" fill="#3b7de8" />
        </svg>
      </AppSlot>
      <AppSlot open stacked>
        <svg width="20" height="20" viewBox="0 0 20 20">
          <path d="M4 1l15 0-1 15-15 2z" fill="#e9eef8" stroke="#8aa1cf" strokeWidth=".6" />
          <path d="M2 2l4 0-2 16-4-1z" fill="#2b56a8" />
          <path d="M6 4h11l-1 7H5z" fill="#2b56a8" />
          <path d="M7 5l.8 5L10 6l1 4 2.500-5" stroke="#fff" strokeWidth="1.200" fill="none" />
          <path d="M5 13h11M5 15.500h10" stroke="#4a6fb8" strokeWidth="1.200" />
        </svg>
      </AppSlot>
      <AppSlot width="w-[45px]" open active>
        <div className="flex h-[19px] w-[19px] items-center justify-center bg-white">
          <TableauMark size={16} />
        </div>
      </AppSlot>
    </div>
  );
}

function Tray() {
  return (
    <div className="ml-auto flex h-full items-center pt-px text-white">
      <div className="h-[25px] w-[25px] rounded-full bg-linear-to-br from-[#f3b82b] to-[#f0660c]" />
      <span className="ml-[13px] w-[48px] text-[17.500px] tracking-[-0.3px] whitespace-nowrap">34°C</span>
      <span className="w-[49px] text-[17.500px] tracking-[-0.3px] whitespace-nowrap">Sunny</span>
      <Icon w={17} h={10} sw={1.4} cls="ml-[22px]">
        <path d="M1 9l7.500-8L16 9" />
      </Icon>
      <Icon w={15} h={19} sw={1.3} cls="ml-[15px]">
        <path d="M1 6h9v8H1zM10 9.500l4-2.500v6l-4-2.500M2.500 3q4-3 8 0M2.500 17q4 3 8 0" />
      </Icon>
      <Icon w={19} h={12} sw={1.4} cls="ml-[12px]">
        <path d="M.8.8h15.500v10.400H.8zM17.800 4v4" />
        <path d="M3 3h7.500v6H3z" fill="currentColor" stroke="none" />
      </Icon>
      <Icon w={21} h={18} sw={1.3} cls="ml-[10px]">
        <path d="M1 6.500h3l4-4v13l-4-4H1zM11 6q2 3 0 6M14 3.500q4 5.500 0 11M17 1q6 8 0 16" />
      </Icon>
      <Icon w={17} h={18} sw={1.4} cls="ml-[12px]">
        <path d="M1 17Q1 4 15.500 2M5 17Q5 8 15.500 6M9 17Q9 12 15.500 10" />
        <circle cx="14" cy="15.500" r="1.700" fill="currentColor" stroke="none" />
      </Icon>
      <span className="ml-[14px] w-[45px] text-[14.500px] tracking-[-0.4px]">ENG</span>
      <span className="w-[57px] text-[14.500px] tracking-[-0.6px]">12:54</span>
      <Icon w={21} h={21} sw={1.4} cls="mr-[25px]">
        <path d="M1 1h19v15h-6l-3.500 3.500L7 16H1z" />
      </Icon>
      <div className="mr-[4px] h-[38px] w-px bg-[#8a8a86]" />
    </div>
  );
}

function Taskbar() {
  return (
    <div className="flex h-[38px] shrink-0 items-center bg-[linear-gradient(90deg,#303035_0px,#2a353d_380px,#2b3a42_480px,#30382a_600px,#2d3022_850px,#2f3d33_1040px,#2a2b1f_1180px,#38251e_1270px,#28271f_1350px,#26271f_1410px,#46272a_1510px,#30241f_1600px,#3c2321_1640px,#26211c_1740px,#24231c_1920px)]">
      <div className="flex w-[45px] justify-center">
        <svg width="20" height="20" viewBox="0 0 20 20" fill="#fff" className="mr-px">
          <path d="M0 2.800l8.500-1.200v8H0zM9.500 1.400L20 0v9.600H9.500zM0 10.500h8.500v8L0 17.300zM9.500 10.500H20V20L9.500 18.600z" />
        </svg>
      </div>
      <div className="flex h-full w-[323px] shrink-0 items-center border border-[#bdbdbd] bg-[#f2f2f2]">
        <Icon w={21} h={21} sw={1.7} cls="ml-[14px] text-[#222]">
          <circle cx="13.500" cy="7.500" r="6.500" />
          <path d="M9 12L1 20" />
        </Icon>
        <span className="ml-[14px] text-[18.500px] tracking-[-0.35px] text-[#222]">Search</span>
        <CampingArt />
      </div>
      <TaskbarApps />
      <Tray />
    </div>
  );
}

export default function App() {
  return (
    <div className="relative flex h-[1080px] w-[1920px] flex-col overflow-hidden bg-white font-['Open_Sans','Noto_Sans',sans-serif]">
      <TitleBar />
      <MenuBar />
      <Toolbar />
      <Workspace />
      <SheetTabs />
      <StatusBar />
      <Taskbar />
      <StoryPopup />
    </div>
  );
}
